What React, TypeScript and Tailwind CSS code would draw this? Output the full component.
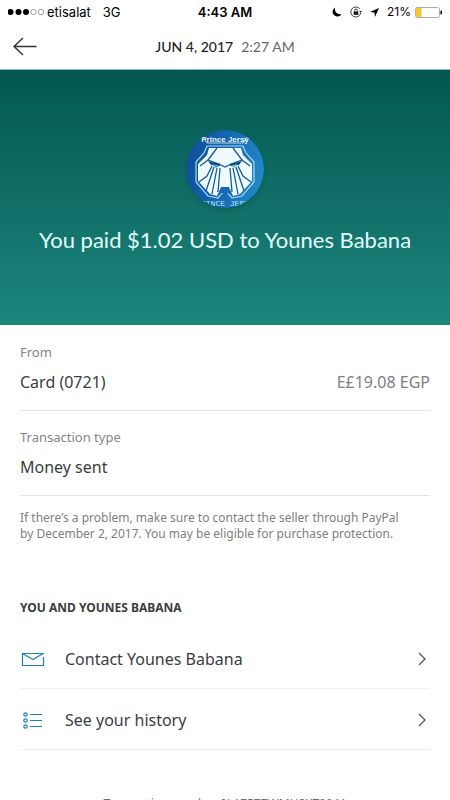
import type { ReactNode } from 'react';

function StatusBar() {
  return (
    <div className="grid h-6 grid-cols-[1fr_auto_1fr] items-center px-2 font-['Inter',sans-serif] text-[13px] leading-6 text-black">
      <div className="flex items-center">
        <svg aria-label="Signal: 3 of 5" role="img" width="37" height="8" viewBox="0 0 37 8">
          <circle cx="2.5" cy="4" r="3" />
          <circle cx="10.5" cy="4" r="3" />
          <circle cx="18" cy="4" r="3" />
          <circle cx="25.5" cy="4" r="2.7" fill="none" stroke="#777" strokeWidth="0.7" />
          <circle cx="33" cy="4" r="2.7" fill="none" stroke="#777" strokeWidth="0.7" />
        </svg>
        <span className="ml-0.5">etisalat</span>
        <span className="ml-3">3G</span>
      </div>
      <span className="font-semibold">4:43 AM</span>
      <div className="flex items-center justify-end">
        <svg aria-hidden="true" width="10" height="10" viewBox="0 0 10 10">
          <path d="M3.3.4A4.8 4.8 0 1 0 9.6 7C5.5 8.3 1.8 4.7 3.3.4Z" />
        </svg>
        <svg aria-hidden="true" className="ml-2" width="12" height="12" viewBox="0 0 12 12" fill="none" stroke="#111" strokeWidth="0.8">
          <path d="M9.8 3A5 5 0 1 0 10.7 7" />
          <path d="m9.2 5.2 1.7 1.8.9-2.2Z" fill="#111" stroke="none" />
          <rect x="3.7" y="5.5" width="4.6" height="3.3" fill="#111" stroke="none" />
          <path d="M4.7 5.5V4.4a1.3 1.3 0 0 1 2.6 0v1.1" />
        </svg>
        <svg aria-hidden="true" className="ml-2" width="9" height="9" viewBox="0 0 9 9">
          <path d="M9 0 5 9 4.5 4.5 0 4Z" />
        </svg>
        <span className="ml-2 text-[12px]">21%</span>
        <svg aria-hidden="true" className="ml-1" width="27" height="11" viewBox="0 0 27 11">
          <rect x="0.5" y="0.5" width="24" height="10" rx="2" fill="#fff" stroke="#888" strokeWidth="0.7" />
          <path d="M2 1h4.5v9H2a1 1 0 0 1-1-1V2a1 1 0 0 1 1-1Z" fill="#fdc52c" />
          <path d="M25.5 3.5a2 2 0 0 1 0 4Z" />
        </svg>
      </div>
    </div>
  );
}

function Avatar() {
  return (
    <svg role="img" aria-label="Younes Babana" className="rounded-full shadow-md" width="78" height="78" viewBox="0 0 78 78">
      <defs>
        <linearGradient id="avatar-bg" x1="0" y1="0.3" x2="1" y2="0.5">
          <stop offset="0" stopColor="#0e4f98" />
          <stop offset="0.5" stopColor="#1568b3" />
          <stop offset="1" stopColor="#2288c8" />
        </linearGradient>
        <clipPath id="avatar-clip">
          <circle cx="39" cy="39" r="39" />
        </clipPath>
      </defs>
      <g clipPath="url(#avatar-clip)">
        <rect width="78" height="78" fill="url(#avatar-bg)" />
        <path
          d="M21 16h36l3 7 8 9v20l-12 14-10 2-5-6h-4l-5 6-10-2-12-14V32l8-9Z"
          fill="none"
          stroke="#a9d8ea"
          strokeWidth="1.2"
        />
        <path d="M23 18h32l2 7 9 9v17l-12 13-7 2-5-6h-6l-5 6-7-2-12-13V34l9-9Z" fill="#effafc" />
        <g fill="none" stroke="#135a9f" strokeWidth="1.3">
          <path d="m31 18-9 12 11 4 6 3 6-3 11-4-9-12" />
          <path d="m22 30-8 6M56 30l8 6" />
          <path d="m26 36-5 10-8 6M52 36l5 10 8 6" />
          <path d="m28 37-8 24M50 37l8 24" />
          <path d="m31 38-5 26M47 38l5 26" />
          <path d="m34 38-2 24M44 38l2 24" />
        </g>
        <path d="m22 31 12 3v2l-9-1ZM56 31l-12 3v2l9-1Z" fill="#0f4b84" />
        <path d="m45 36 7-2-4 4Z" fill="#6fcb9b" />
        <path d="m33 36-7-2 4 4Z" fill="#4ba3c4" />
        <path d="m31 66 4-9h8l4 9-5-3h-6Z" fill="#1568b3" />
        <text x="39" y="12" textAnchor="middle" fill="#e7f6f9" fontFamily="Liberation Sans Narrow, sans-serif" fontSize="8" fontWeight="700">
          Prince Jersy
        </text>
        <path d="m17 7 4 6h36l4-6" fill="none" stroke="#e7f6f9" strokeWidth="0.8" />
        <text x="39" y="76" textAnchor="middle" fill="#bde7ed" fontFamily="Liberation Mono, monospace" fontSize="8">
          PRINCE JERSY
        </text>
      </g>
    </svg>
  );
}

function EnvelopeIcon() {
  return (
    <svg aria-hidden="true" width="25" height="20" viewBox="0 0 25 20" fill="none" stroke="#2380b5" strokeWidth="1.2">
      <path d="M20.5 4.5h-18v12h21V8" />
      <path d="m2.5 4.5 10.5 6 10-6h-3" />
    </svg>
  );
}

function ListIcon() {
  return (
    <svg aria-hidden="true" width="25" height="20" viewBox="0 0 25 20" fill="none" stroke="#2380b5" strokeWidth="1.2">
      <circle cx="5.5" cy="4.5" r="1.7" />
      <circle cx="5.5" cy="10.5" r="1.7" />
      <circle cx="5.5" cy="16.5" r="1.7" />
      <path d="M10 4.5h12M10 10.5h12M10 16.5h12" />
    </svg>
  );
}

interface ActionRowProps {
  icon: ReactNode;
  label: string;
}

function ActionRow({ icon, label }: ActionRowProps) {
  return (
    <li className="border-b border-[#eeeeee]">
      <button type="button" className="flex h-15 w-full items-center pt-0.5 text-left text-[16px] text-[#3b3d40]">
        {icon}
        <span className="ml-5 flex-1">{label}</span>
        <svg aria-hidden="true" className="mr-1" width="8" height="14" viewBox="0 0 8 14" fill="none" stroke="#555" strokeWidth="1.3">
          <path d="m1 1 6 6-6 6" />
        </svg>
      </button>
    </li>
  );
}

export default function App() {
  return (
    <div className="h-screen overflow-hidden bg-white font-['Noto_Sans',sans-serif]">
      <StatusBar />
      <header className="grid h-[45px] grid-cols-[1fr_auto_1fr] items-center px-3 font-['Lato',sans-serif]">
        <button type="button" aria-label="Back" className="justify-self-start">
          <svg aria-hidden="true" width="25" height="20" viewBox="0 0 25 20" fill="none" stroke="#333" strokeWidth="1.4">
            <path d="M24.5 9.5H2M11 1 2 9.5l9 8.5" />
          </svg>
        </button>
        <h1 className="flex gap-2 text-[14px] text-[#222]">
          <span className="font-medium">JUN 4, 2017</span>
          <span className="text-[#666]">2:27 AM</span>
        </h1>
      </header>

      <section className="flex h-64 flex-col items-center border-t border-[#79bec3] bg-linear-to-b from-[#045652] to-[#1c877d] pt-15">
        <Avatar />
        <p className="mt-4 font-['Lato',sans-serif] text-[22px] leading-8 text-[#e3fffb]">
          You paid $1.02 USD to Younes Babana
        </p>
      </section>

      <main className="px-5 pt-px">
        <dl>
          <div className="border-b border-[#e5e5e5] py-4">
            <dt className="text-[13px] leading-5 text-[#858585]">From</dt>
            <dd className="mt-2 flex justify-between text-[16px] leading-6 text-[#3b3d40]">
              <span>Card (0721)</span>
              <span className="text-[#808080]">E£19.08 EGP</span>
            </dd>
          </div>
          <div className="border-b border-[#e5e5e5] py-4">
            <dt className="text-[13px] leading-5 text-[#858585]">Transaction type</dt>
            <dd className="mt-2 text-[16px] leading-6 text-[#3b3d40]">Money sent</dd>
          </div>
        </dl>
        <p className="mt-3.5 pr-4 text-[12px] leading-4 text-[#808080]">
          If there’s a problem, make sure to contact the seller through PayPal by December 2, 2017. You may be eligible for purchase protection.
        </p>

        <h2 className="mt-14 text-[12px] leading-5 font-bold text-[#3b3d40]">YOU AND YOUNES BABANA</h2>
        <ul className="mt-2.5">
          <ActionRow icon={<EnvelopeIcon />} label="Contact Younes Babana" />
          <ActionRow icon={<ListIcon />} label="See your history" />
        </ul>
        <p className="mt-11 text-center text-[12px] leading-5 text-[#707070]">Transaction number 0L17577WMUSKT0041</p>
      </main>
    </div>
  );
}
